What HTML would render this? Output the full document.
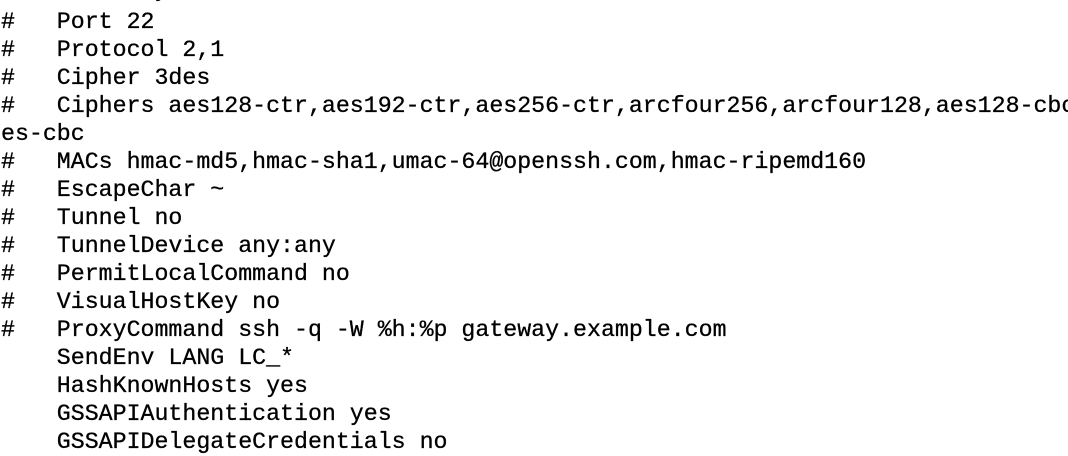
<!DOCTYPE html>
<html><head><style>
html,body{margin:0;padding:0;background:#fff;width:1068px;height:454px;overflow:hidden}
pre{position:absolute;left:1px;top:-20px;margin:0;font-family:"Liberation Mono",monospace;font-size:23.25px;line-height:28px;color:#000;white-space:pre;-webkit-text-stroke:0.3px #000}
.t{position:relative;top:-4px}
</style></head><body><pre><span class="t">#   IdentityFile ~/.ssh/id_dsa</span>
#   Port 22
#   Protocol 2,1
#   Cipher 3des
#   Ciphers aes128-ctr,aes192-ctr,aes256-ctr,arcfour256,arcfour128,aes128-cbc
es-cbc
#   MACs hmac-md5,hmac-sha1,umac-64@openssh.com,hmac-ripemd160
#   EscapeChar ~
#   Tunnel no
#   TunnelDevice any:any
#   PermitLocalCommand no
#   VisualHostKey no
#   ProxyCommand ssh -q -W %h:%p gateway.example.com
    SendEnv LANG LC_*
    HashKnownHosts yes
    GSSAPIAuthentication yes
    GSSAPIDelegateCredentials no</pre></body></html>
